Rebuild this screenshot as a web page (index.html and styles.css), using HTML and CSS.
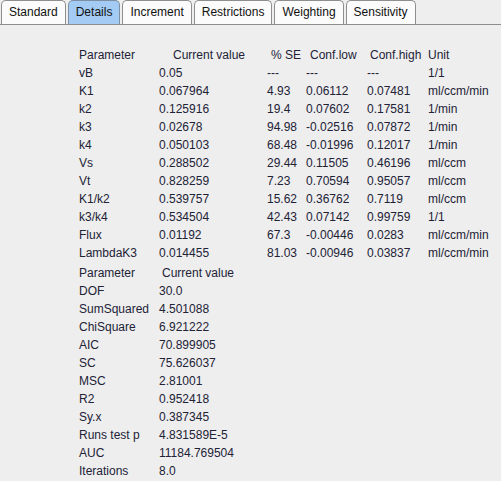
FILE: index.html
```html
<!DOCTYPE html>
<html>
<head>
<meta charset="utf-8">
<link rel="stylesheet" href="styles.css">
</head>
<body>
<div class="tabs">
  <div class="tab">Standard</div>
  <div class="tab active">Details</div>
  <div class="tab">Increment</div>
  <div class="tab">Restrictions</div>
  <div class="tab">Weighting</div>
  <div class="tab">Sensitivity</div>
</div>
<div class="panel">
  <div class="grid grid-main">
    <div class="h">Parameter</div><div class="h h-cv">Current value</div><div class="h h-se">% SE</div><div class="h h-cl">Conf.low</div><div class="h h-ch">Conf.high</div><div class="h">Unit</div>
    <div>vB</div><div>0.05</div><div>---</div><div>---</div><div>---</div><div>1/1</div>
    <div>K1</div><div>0.067964</div><div>4.93</div><div>0.06112</div><div>0.07481</div><div>ml/ccm/min</div>
    <div>k2</div><div>0.125916</div><div>19.4</div><div>0.07602</div><div>0.17581</div><div>1/min</div>
    <div>k3</div><div>0.02678</div><div>94.98</div><div>-0.02516</div><div>0.07872</div><div>1/min</div>
    <div>k4</div><div>0.050103</div><div>68.48</div><div>-0.01996</div><div>0.12017</div><div>1/min</div>
    <div>Vs</div><div>0.288502</div><div>29.44</div><div>0.11505</div><div>0.46196</div><div>ml/ccm</div>
    <div>Vt</div><div>0.828259</div><div>7.23</div><div>0.70594</div><div>0.95057</div><div>ml/ccm</div>
    <div>K1/k2</div><div>0.539757</div><div>15.62</div><div>0.36762</div><div>0.7119</div><div>ml/ccm</div>
    <div>k3/k4</div><div>0.534504</div><div>42.43</div><div>0.07142</div><div>0.99759</div><div>1/1</div>
    <div>Flux</div><div>0.01192</div><div>67.3</div><div>-0.00446</div><div>0.0283</div><div>ml/ccm/min</div>
    <div>LambdaK3</div><div>0.014455</div><div>81.03</div><div>-0.00946</div><div>0.03837</div><div>ml/ccm/min</div>
  </div>
  <div class="grid grid-stats">
    <div class="h">Parameter</div><div class="h h-cv2">Current value</div>
    <div>DOF</div><div>30.0</div>
    <div>SumSquared</div><div>4.501088</div>
    <div>ChiSquare</div><div>6.921222</div>
    <div>AIC</div><div>70.899905</div>
    <div>SC</div><div>75.626037</div>
    <div>MSC</div><div>2.81001</div>
    <div>R2</div><div>0.952418</div>
    <div>Sy.x</div><div>0.387345</div>
    <div>Runs test p</div><div>4.831589E-5</div>
    <div>AUC</div><div>11184.769504</div>
    <div>Iterations</div><div>8.0</div>
  </div>
</div>
</body>
</html>
```

FILE: styles.css
```css
html, body {
  margin: 0;
  padding: 0;
  background: #eeeeee;
  font-family: "Liberation Sans", Arial, sans-serif;
  font-size: 12px;
  color: #222236;
}

.tabs {
  display: flex;
  align-items: flex-end;
  gap: 2px;
  height: 25px;
  padding-left: 1px;
  box-sizing: border-box;
  border-bottom: 1px solid #8e8e8e;
  background: #eeeeee;
}

.tab {
  height: 24px;
  box-sizing: border-box;
  padding: 0 7px;
  line-height: 23px;
  border: 1px solid #8e8e8e;
  border-bottom: none;
  border-radius: 5px 5px 0 0;
  background: #fbfbfb;
  color: #111;
  white-space: nowrap;
}

.tab.active {
  background: #a3cbf3;
  border-color: #7d8fa3;
}

.panel {
  padding: 21px 0 0 79px;
}

.grid {
  display: grid;
  grid-auto-rows: 18px;
  line-height: 18px;
  white-space: nowrap;
}

.grid-main {
  grid-template-columns: 80px 108px 39px 61px 61px auto;
}

.grid-stats {
  margin-top: 2px;
  grid-template-columns: 80px auto;
}

.h-cv { padding-left: 14px; }
.h-se { padding-left: 4px; }
.h-cl { padding-left: 4px; }
.h-ch { padding-left: 3px; }
.h-cv2 { padding-left: 3px; }
```
